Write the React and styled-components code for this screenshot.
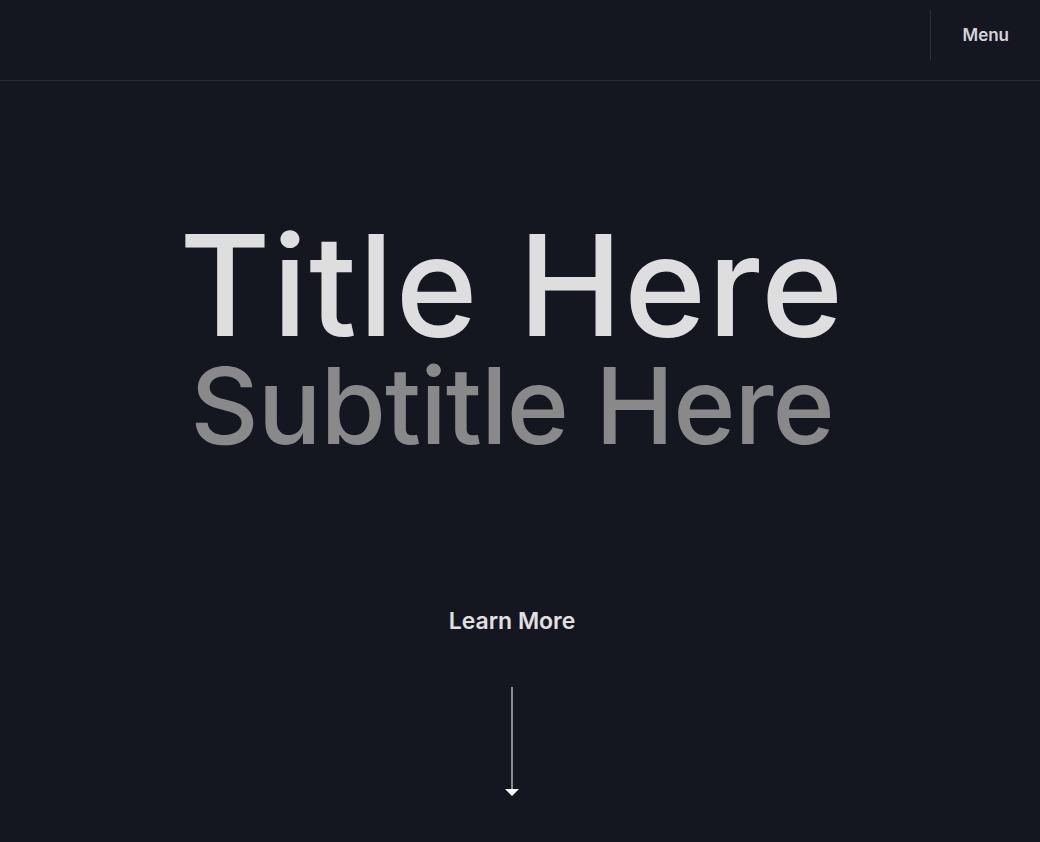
import styled, { createGlobalStyle } from "styled-components";

const GlobalStyle = createGlobalStyle`
  html, body {
    margin: 0;
    padding: 0;
    background: #141620;
    font-family: Inter, "Noto Sans", sans-serif;
  }
`;

const Page = styled.div`
  min-height: 842px;
  display: flex;
  flex-direction: column;
  background: #141620;
`;

const Header = styled.header`
  height: 81px;
  box-sizing: border-box;
  border-bottom: 1px solid #2a2c36;
  display: flex;
  justify-content: flex-end;
  align-items: flex-start;
  padding-top: 10px;
`;

const MenuButton = styled.button`
  height: 50px;
  border: none;
  border-left: 1px solid #2e303a;
  background: transparent;
  color: #d4d4d8;
  font-family: inherit;
  font-size: 17px;
  font-weight: 600;
  padding: 0 31px 0 31px;
  cursor: pointer;
`;

const Hero = styled.main`
  display: flex;
  flex-direction: column;
  align-items: center;
  padding-right: 16px;
`;

const Title = styled.h1`
  margin: 134px 0 -2px;
  font-size: 140px;
  line-height: 1;
  font-weight: 500;
  letter-spacing: 1.6px;
  color: #dedede;
`;

const Subtitle = styled.h2`
  margin: 0;
  font-size: 106px;
  line-height: 1;
  font-weight: 500;
  letter-spacing: -1px;
  color: #898989;
`;

const LearnMore = styled.a`
  margin-top: 148px;
  font-size: 23px;
  font-weight: 600;
  color: #e0e0e0;
  text-decoration: none;
`;

const Arrow = styled.svg`
  margin-top: 52px;
  display: block;
`;

export default function App() {
  return (
    <Page>
      <GlobalStyle />
      <Header>
        <MenuButton>Menu</MenuButton>
      </Header>
      <Hero>
        <Title>Title Here</Title>
        <Subtitle>Subtitle Here</Subtitle>
        <LearnMore href="#">Learn More</LearnMore>
        <Arrow width="16" height="110" viewBox="0 0 16 110">
          <line x1="8" y1="0" x2="8" y2="104" stroke="#ffffff" strokeWidth="1" />
          <path d="M1 102 L15 102 L8 109 Z" fill="#ffffff" />
        </Arrow>
      </Hero>
    </Page>
  );
}
